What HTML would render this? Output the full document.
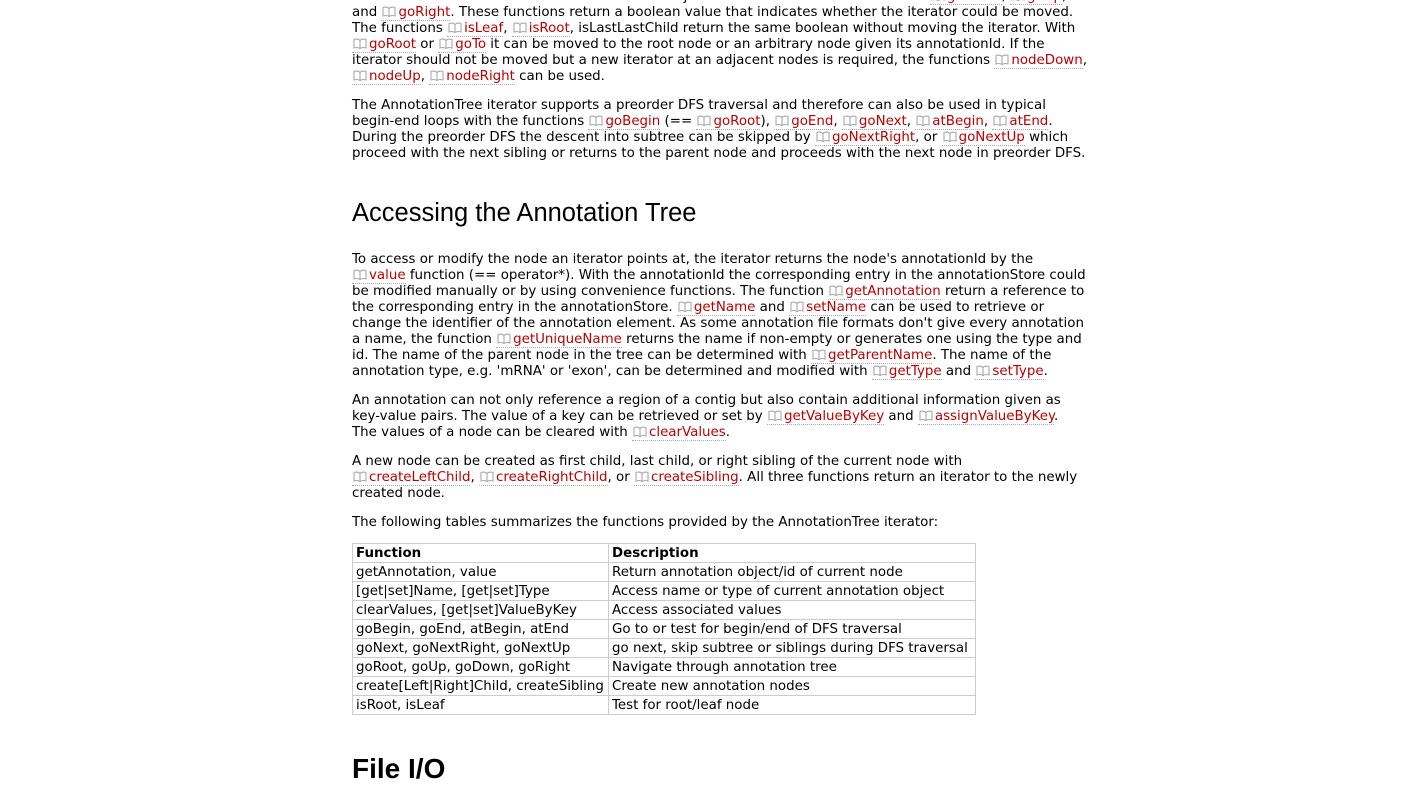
<!DOCTYPE html>
<html><head><meta charset="utf-8"><style>
body{margin:0;background:#fff;width:1423px;height:797px;overflow:hidden;position:relative;font-family:"DejaVu Sans",Verdana,sans-serif;font-size:13.4px;color:#000}
.p{position:absolute;left:352px;line-height:16px;white-space:nowrap;margin-top:1px}
a{color:#b00;text-decoration:none;border-bottom:1px dotted #aaa;padding-left:1px}
.b{display:inline-block;width:14px;height:11px;margin-right:2px;vertical-align:-1px}
h2{position:absolute;left:352px;top:197px;margin:0;font:normal 25.5px "Liberation Sans",Arial,sans-serif;line-height:32px}
h1{position:absolute;left:352px;top:751px;margin:0;font:bold 28px "Liberation Sans",Arial,sans-serif;line-height:36px}
table{position:absolute;left:352px;top:543px;border-collapse:collapse;font-size:13.4px}
td,th{border:1px solid #ccc;height:18px;padding:1px 3px 0;text-align:left;line-height:17px;white-space:nowrap;box-sizing:border-box}
th{font-weight:bold}
</style></head><body>
<svg width="0" height="0" style="position:absolute"><defs><symbol id="bk" viewBox="0 0 14 11"><path d="M7 2.5C5.5 1 3 0.8 1 1.5V10C3 9.3 5.5 9.5 7 10.5C8.5 9.5 11 9.3 13 10V1.5C11 0.8 8.5 1 7 2.5ZM7 2.5V10.5" fill="none" stroke="#aaa" stroke-width="1.1"/></symbol></defs></svg>
<div class="p" style="top:-12px">it starts at the root node and can be moved to adjacent tree nodes with the functions <a><svg class="b"><use href="#bk"/></svg>goDown</a>, <a><svg class="b"><use href="#bk"/></svg>goUp</a>,<br>
and <a><svg class="b"><use href="#bk"/></svg>goRight</a>. These functions return a boolean value that indicates whether the iterator could be moved.<br>
The functions <a><svg class="b"><use href="#bk"/></svg>isLeaf</a>, <a><svg class="b"><use href="#bk"/></svg>isRoot</a>, isLastLastChild return the same boolean without moving the iterator. With<br>
<a><svg class="b"><use href="#bk"/></svg>goRoot</a> or <a><svg class="b"><use href="#bk"/></svg>goTo</a> it can be moved to the root node or an arbitrary node given its annotationId. If the<br>
iterator should not be moved but a new iterator at an adjacent nodes is required, the functions <a><svg class="b"><use href="#bk"/></svg>nodeDown</a>,<br>
<a><svg class="b"><use href="#bk"/></svg>nodeUp</a>, <a><svg class="b"><use href="#bk"/></svg>nodeRight</a> can be used.</div>
<div class="p" style="top:97px">The AnnotationTree iterator supports a preorder DFS traversal and therefore can also be used in typical<br>
begin-end loops with the functions <a><svg class="b"><use href="#bk"/></svg>goBegin</a> (== <a><svg class="b"><use href="#bk"/></svg>goRoot</a>), <a><svg class="b"><use href="#bk"/></svg>goEnd</a>, <a><svg class="b"><use href="#bk"/></svg>goNext</a>, <a><svg class="b"><use href="#bk"/></svg>atBegin</a>, <a><svg class="b"><use href="#bk"/></svg>atEnd</a>.<br>
During the preorder DFS the descent into subtree can be skipped by <a><svg class="b"><use href="#bk"/></svg>goNextRight</a>, or <a><svg class="b"><use href="#bk"/></svg>goNextUp</a> which<br>
proceed with the next sibling or returns to the parent node and proceeds with the next node in preorder DFS.</div>
<h2>Accessing the Annotation Tree</h2>
<div class="p" style="top:251px">To access or modify the node an iterator points at, the iterator returns the node's annotationId by the<br>
<a><svg class="b"><use href="#bk"/></svg>value</a> function (== operator*). With the annotationId the corresponding entry in the annotationStore could<br>
be modified manually or by using convenience functions. The function <a><svg class="b"><use href="#bk"/></svg>getAnnotation</a> return a reference to<br>
the corresponding entry in the annotationStore. <a><svg class="b"><use href="#bk"/></svg>getName</a> and <a><svg class="b"><use href="#bk"/></svg>setName</a> can be used to retrieve or<br>
change the identifier of the annotation element. As some annotation file formats don't give every annotation<br>
a name, the function <a><svg class="b"><use href="#bk"/></svg>getUniqueName</a> returns the name if non-empty or generates one using the type and<br>
id. The name of the parent node in the tree can be determined with <a><svg class="b"><use href="#bk"/></svg>getParentName</a>. The name of the<br>
annotation type, e.g. 'mRNA' or 'exon', can be determined and modified with <a><svg class="b"><use href="#bk"/></svg>getType</a> and <a><svg class="b"><use href="#bk"/></svg>setType</a>.</div>
<div class="p" style="top:392px">An annotation can not only reference a region of a contig but also contain additional information given as<br>
key-value pairs. The value of a key can be retrieved or set by <a><svg class="b"><use href="#bk"/></svg>getValueByKey</a> and <a><svg class="b"><use href="#bk"/></svg>assignValueByKey</a>.<br>
The values of a node can be cleared with <a><svg class="b"><use href="#bk"/></svg>clearValues</a>.</div>
<div class="p" style="top:453px">A new node can be created as first child, last child, or right sibling of the current node with<br>
<a><svg class="b"><use href="#bk"/></svg>createLeftChild</a>, <a><svg class="b"><use href="#bk"/></svg>createRightChild</a>, or <a><svg class="b"><use href="#bk"/></svg>createSibling</a>. All three functions return an iterator to the newly<br>
created node.</div>
<div class="p" style="top:514px">The following tables summarizes the functions provided by the AnnotationTree iterator:</div>
<table>
<tr><th style="width:256px">Function</th><th style="width:367px">Description</th></tr>
<tr><td>getAnnotation, value</td><td>Return annotation object/id of current node</td></tr>
<tr><td>[get|set]Name, [get|set]Type</td><td>Access name or type of current annotation object</td></tr>
<tr><td>clearValues, [get|set]ValueByKey</td><td>Access associated values</td></tr>
<tr><td>goBegin, goEnd, atBegin, atEnd</td><td>Go to or test for begin/end of DFS traversal</td></tr>
<tr><td>goNext, goNextRight, goNextUp</td><td>go next, skip subtree or siblings during DFS traversal</td></tr>
<tr><td>goRoot, goUp, goDown, goRight</td><td>Navigate through annotation tree</td></tr>
<tr><td>create[Left|Right]Child, createSibling</td><td>Create new annotation nodes</td></tr>
<tr><td>isRoot, isLeaf</td><td>Test for root/leaf node</td></tr>
</table>
<h1>File I/O</h1>
</body></html>
